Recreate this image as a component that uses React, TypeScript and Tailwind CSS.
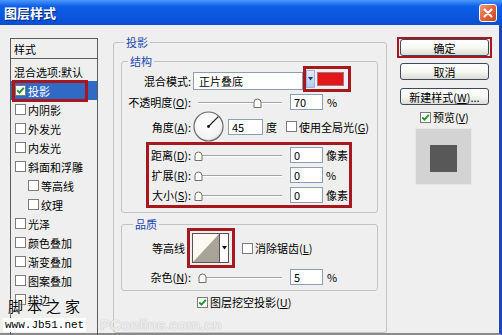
import React from "react";

const RED = "border-[#a8171d]";

function Check({ checked }: { checked?: boolean }) {
  return (
    <span className="inline-flex w-[11px] h-[11px] shrink-0 border border-[#7c7c7c] bg-white items-center justify-center">
      {checked && (
        <svg width="9" height="9" viewBox="0 0 9 9">
          <path d="M1.2 4.3 L3.5 6.7 L7.8 1.8" stroke="#1f9a22" strokeWidth="1.9" fill="none" />
        </svg>
      )}
    </span>
  );
}

function Slider({ pct }: { pct: number }) {
  return (
    <div className="relative w-[90px] h-[14px] shrink-0">
      <div className="absolute left-[4px] right-[2px] top-[7px] h-[2px] border-t border-t-[#a3a3a3] border-b border-b-white" />
      <svg
        className="absolute top-[3px]"
        style={{ left: `${(pct * 84) / 100}px` }}
        width="9"
        height="10"
        viewBox="0 0 9 10"
      >
        <path d="M1 9.5 V4.5 Q1 1 4.5 1 Q8 1 8 4.5 V9.5 Z" fill="#fbfbf4" stroke="#6e6e6e" strokeWidth="1" />
      </svg>
    </div>
  );
}

function NumBox({ v, w = "w-[33px]" }: { v: string; w?: string }) {
  return (
    <div className={`${w} h-[16px] shrink-0 bg-white border border-[#8c9db6] pl-[3px] flex items-center leading-[14px]`}>
      {v}
    </div>
  );
}

function Btn({ children, className = "" }: { children: React.ReactNode; className?: string }) {
  return (
    <div
      className={`w-[89px] h-[17px] rounded-[3px] border border-[#3e4a5a] bg-linear-to-b from-white via-[#f7f7f4] to-[#dcdcd4] flex items-center justify-center ${className}`}
    >
      {children}
    </div>
  );
}

function Dial() {
  return (
    <svg width="31" height="31" viewBox="0 0 31 31" className="shrink-0">
      <defs>
        <radialGradient id="dg" cx="40%" cy="35%" r="70%">
          <stop offset="0%" stopColor="#ffffff" />
          <stop offset="80%" stopColor="#f3f3f3" />
          <stop offset="100%" stopColor="#cfcfcf" />
        </radialGradient>
      </defs>
      <circle cx="15.5" cy="15.5" r="14.5" fill="url(#dg)" stroke="#6a6a6a" strokeWidth="1.2" />
      <line x1="15.5" y1="15.5" x2="25.3" y2="5.7" stroke="#222" strokeWidth="1.2" />
      <circle cx="15.5" cy="15.5" r="1.4" fill="#111" />
    </svg>
  );
}

const items: { label: React.ReactNode; check?: boolean; indent?: boolean; sel?: boolean; none?: boolean }[] = [
  { label: "混合选项:默认", none: true },
  { label: "投影", check: true, sel: true },
  { label: "内阴影" },
  { label: "外发光" },
  { label: "内发光" },
  { label: "斜面和浮雕" },
  { label: "等高线", indent: true },
  { label: "纹理", indent: true },
  { label: "光泽" },
  { label: "颜色叠加" },
  { label: "渐变叠加" },
  { label: "图案叠加" },
  { label: "描边" },
];

export default function App() {
  return (
    <div className="w-[502px] h-[335px] overflow-hidden relative bg-[#efefef] font-['Noto_Sans_CJK_SC','Noto_Sans',sans-serif] text-[11px] text-black leading-[14px]">
      {/* title bar */}
      <div className="h-[25px] flex items-center bg-linear-to-b from-[#4a98fc] via-[#0d5fe8] via-25% to-[#0a4fd2] pl-[4px]">
        <span className="text-white font-bold text-[13px] leading-[16px] [text-shadow:1px_1px_0_#0a2a80]">图层样式</span>
        <div className="ml-auto mr-[5px] w-[18px] h-[18px] rounded-[3px] border border-white bg-linear-to-br from-[#ee9a78] via-[#e0653a] to-[#c8421a] flex items-center justify-center">
          <svg width="10" height="10" viewBox="0 0 10 10">
            <path d="M1.5 1.5 L8.5 8.5 M8.5 1.5 L1.5 8.5" stroke="white" strokeWidth="2" strokeLinecap="round" />
          </svg>
        </div>
      </div>

      {/* body */}
      <div className="h-[310px] flex items-start border-r-[3px] border-r-[#1d47b8] border-b-2 border-b-[#8a8a8a]">
        {/* left list */}
        <div className="ml-[10px] mt-[13px] w-[88px] h-[300px] border border-[#5c5c5c] border-b-0 flex flex-col shrink-0">
          <div className="h-[20px] border-b border-[#5c5c5c] pl-[3px] flex items-center">样式</div>
          <div className="pt-[3px] flex flex-col">
            {items.map((it, i) =>
              it.sel ? (
                <div key={i} className="h-[19px] flex items-center bg-[#316ac5] text-white">
                  <div className={`ml-[1px] w-[76px] h-[22px] shrink-0 border-[3px] ${RED} flex items-center gap-[2px]`}>
                    <Check checked />
                    <span>{it.label}</span>
                  </div>
                </div>
              ) : (
                <div
                  key={i}
                  className={`h-[19px] flex items-center gap-[2px] ${it.none ? "pl-[3px]" : it.indent ? "pl-[17px]" : "pl-[4px]"}`}
                >
                  {!it.none && <Check />}
                  <span>{it.label}</span>
                </div>
              )
            )}
          </div>
        </div>

        {/* middle */}
        <fieldset className="ml-[15px] mt-[9px] w-[274px] h-[299px] shrink-0 min-w-0 border border-[#c2c2c2] rounded-[3px]">
          <legend className="ml-[10px] px-[2px] text-[#1c47b0] leading-[16px]">投影</legend>

          {/* 结构 */}
          <fieldset className="ml-[7px] mt-[3px] w-[257px] min-w-0 border border-[#c2c2c2] rounded-[3px] pb-[4px]">
            <legend className="ml-[6px] px-[2px] text-[#1c47b0] leading-[16px]">结构</legend>

            <div className="h-[24px] flex items-center">
              <span className="w-[69px] text-right shrink-0">混合模式:</span>
              <div className="ml-[2px] w-[110px] h-[18px] shrink-0 bg-white border border-[#8c9db6] pl-[5px] flex items-center">
                正片叠底
              </div>
              <div className={`self-start -mt-[3px] w-[48px] h-[26px] shrink-0 border-[3px] ${RED} flex items-center`}>
                <div className="w-[9px] h-[18px] bg-linear-to-b from-[#e3ecfd] to-[#b1c8f4] border border-[#9db4e0] flex items-center justify-center">
                  <svg width="5" height="4" viewBox="0 0 5 4">
                    <path d="M0 0 H5 L2.5 3.5 Z" fill="#2a3a5a" />
                  </svg>
                </div>
                <div className="ml-[2px] w-[27px] h-[14px] bg-[#e3161c] border border-[#9a7a7a]" />
              </div>
            </div>

            <div className="h-[18px] flex items-center">
              <span className="w-[69px] text-right shrink-0">
                不透明度(<u>O</u>):
              </span>
              <div className="ml-[3px]">
                <Slider pct={70} />
              </div>
              <div className="ml-[6px]">
                <NumBox v="70" />
              </div>
              <span className="ml-[4px]">%</span>
            </div>

            <div className="h-[31px] flex items-center">
              <span className="w-[69px] text-right shrink-0">
                角度(<u>A</u>):
              </span>
              <div className="ml-[2px] flex">
                <Dial />
              </div>
              <div className="ml-[4px]">
                <NumBox v="45" w="w-[35px]" />
              </div>
              <span className="ml-[3px]">度</span>
              <span className="ml-[9px] flex">
                <Check />
              </span>
              <span className="ml-[2px] whitespace-nowrap">
                使用全局光(<u>G</u>)
              </span>
            </div>

            <div className={`ml-[24px] w-[206px] border-[3px] ${RED} flex flex-col`}>
              {[
                { l: "距离", k: "D", u: "像素" },
                { l: "扩展", k: "R", u: "%" },
                { l: "大小", k: "S", u: "像素" },
              ].map((r) => (
                <div key={r.k} className="h-[20px] flex items-center">
                  <span className="w-[42px] text-right shrink-0 whitespace-nowrap">
                    {r.l}(<u>{r.k}</u>):
                  </span>
                  <div className="ml-[3px]">
                    <Slider pct={0} />
                  </div>
                  <div className="ml-[6px]">
                    <NumBox v="0" />
                  </div>
                  <span className="ml-[3px]">{r.u}</span>
                </div>
              ))}
            </div>
          </fieldset>

          {/* 品质 */}
          <fieldset className="ml-[7px] mt-[3px] w-[257px] min-w-0 border border-[#c2c2c2] rounded-[3px] pb-[5px]">
            <legend className="ml-[11px] px-[2px] text-[#1c47b0] leading-[16px]">品质</legend>
            <div className="-mt-[4px] h-[40px] flex items-center">
              <span className="w-[63px] text-right shrink-0">等高线</span>
              <div className={`ml-[2px] w-[48px] h-[40px] shrink-0 border-[3px] ${RED} pl-[2px] flex items-center`}>
                <div className="w-[37px] h-[30px] border border-[#555] flex bg-white">
                  <svg width="26" height="28" viewBox="0 0 26 28" className="shrink-0">
                    <rect x="0" y="0" width="26" height="28" fill="#fbf9f1" />
                    <polygon points="0,28 26,0 26,28" fill="#aaa498" />
                  </svg>
                  <div className="w-[9px] border-l border-[#555] bg-white flex items-center justify-center">
                    <svg width="5" height="4" viewBox="0 0 5 4">
                      <path d="M0 0 H5 L2.5 3.5 Z" fill="#111" />
                    </svg>
                  </div>
                </div>
              </div>
              <span className="ml-[7px] flex">
                <Check />
              </span>
              <span className="ml-[2px] whitespace-nowrap">
                消除锯齿(<u>L</u>)
              </span>
            </div>
            <div className="h-[17px] flex items-center">
              <span className="w-[69px] text-right shrink-0">
                杂色(<u>N</u>):
              </span>
              <div className="ml-[3px]">
                <Slider pct={5} />
              </div>
              <div className="ml-[6px]">
                <NumBox v="5" />
              </div>
              <span className="ml-[4px]">%</span>
            </div>
          </fieldset>

          <div className="mt-[3px] h-[16px] ml-[83px] flex items-center">
            <Check checked />
            <span className="ml-[2px] whitespace-nowrap">
              图层挖空投影(<u>U</u>)
            </span>
          </div>
        </fieldset>

        {/* right */}
        <div className="ml-[10px] mt-[12px] flex flex-col items-start shrink-0">
          <div className={`border-2 ${RED} px-[1px]`}>
            <Btn>确定</Btn>
          </div>
          <Btn className="ml-[3px] mt-[5px]">取消</Btn>
          <Btn className="ml-[3px] mt-[8px]">
            <span className="whitespace-nowrap">
              新建样式(<u>W</u>)...
            </span>
          </Btn>
          <div className="ml-[23px] mt-[5px] h-[14px] flex items-center">
            <Check checked />
            <span className="ml-[2px]">
              预览(<u>V</u>)
            </span>
          </div>
          <div className="ml-[18px] mt-[4px] w-[57px] h-[57px] bg-[#d3d3d3] border border-[#e8e8e8] flex items-center justify-center">
            <div className="w-[27px] h-[27px] bg-[#585858] mt-[3px]" />
          </div>
        </div>
      </div>

      {/* watermarks */}
      <div className="absolute left-[8px] top-[297px] text-[15px] leading-[18px] tracking-[4px] text-black [text-shadow:0_0_2px_#fff,0_0_2px_#fff]">
        脚本之家
      </div>
      <div className="absolute left-[3px] top-[318px] h-[14px] px-[2px] bg-white font-['Liberation_Mono',monospace] text-[11px] leading-[14px] text-black">
        www.Jb51.net
      </div>
      <div className="absolute left-[100px] top-[316px] font-['Liberation_Sans',sans-serif] font-bold text-[15px] leading-[18px] text-white/80 [text-shadow:0_0_1px_#9a9a9a]">
        PConline.com.cn
      </div>
    </div>
  );
}
